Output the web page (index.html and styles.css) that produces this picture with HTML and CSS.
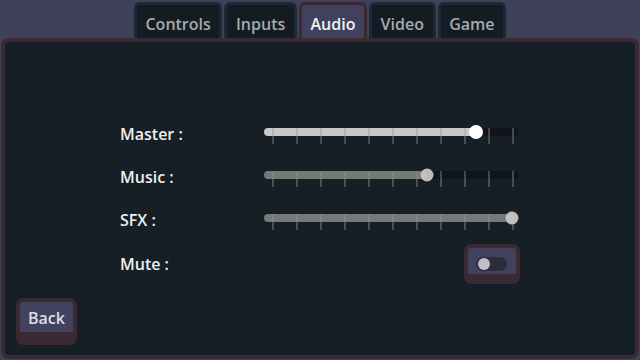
FILE: index.html
```html
<!DOCTYPE html>
<html>
<head>
<meta charset="utf-8">
<link rel="stylesheet" href="styles.css">
</head>
<body>
  <nav class="tabs">
    <div class="tab">Controls</div>
    <div class="tab">Inputs</div>
    <div class="tab active">Audio</div>
    <div class="tab">Video</div>
    <div class="tab">Game</div>
  </nav>
  <main class="panel">
    <div class="settings">
      <div class="label">Master :</div>
      <svg class="slider" width="256" height="32" viewBox="0 0 256 32">
        <rect class="track" x="0" y="13" width="255" height="8" rx="4"/>
        <rect class="fill focus" x="0" y="13" width="212" height="8" rx="4"/>
        <g class="ticks">
          <rect x="8" y="13" width="2" height="16"/><rect x="32" y="13" width="2" height="16"/><rect x="56" y="13" width="2" height="16"/><rect x="80" y="13" width="2" height="16"/><rect x="104" y="13" width="2" height="16"/><rect x="128" y="13" width="2" height="16"/><rect x="152" y="13" width="2" height="16"/><rect x="176" y="13" width="2" height="16"/><rect x="200" y="13" width="2" height="16"/><rect x="224" y="13" width="2" height="16"/><rect x="248" y="13" width="2" height="16"/>
        </g>
        <circle class="grab focus" cx="212" cy="17" r="7"/>
      </svg>

      <div class="label">Music :</div>
      <svg class="slider" width="256" height="32" viewBox="0 0 256 32">
        <rect class="track" x="0" y="13" width="255" height="8" rx="4"/>
        <rect class="fill" x="0" y="13" width="163" height="8" rx="4"/>
        <g class="ticks">
          <rect x="8" y="13" width="2" height="16"/><rect x="32" y="13" width="2" height="16"/><rect x="56" y="13" width="2" height="16"/><rect x="80" y="13" width="2" height="16"/><rect x="104" y="13" width="2" height="16"/><rect x="128" y="13" width="2" height="16"/><rect x="152" y="13" width="2" height="16"/><rect x="176" y="13" width="2" height="16"/><rect x="200" y="13" width="2" height="16"/><rect x="224" y="13" width="2" height="16"/><rect x="248" y="13" width="2" height="16"/>
        </g>
        <circle class="grab" cx="163" cy="17" r="6.5"/>
      </svg>

      <div class="label">SFX :</div>
      <svg class="slider" width="256" height="32" viewBox="0 0 256 32">
        <rect class="track" x="0" y="13" width="255" height="8" rx="4"/>
        <rect class="fill" x="0" y="13" width="249" height="8" rx="4"/>
        <g class="ticks">
          <rect x="8" y="13" width="2" height="16"/><rect x="32" y="13" width="2" height="16"/><rect x="56" y="13" width="2" height="16"/><rect x="80" y="13" width="2" height="16"/><rect x="104" y="13" width="2" height="16"/><rect x="128" y="13" width="2" height="16"/><rect x="152" y="13" width="2" height="16"/><rect x="176" y="13" width="2" height="16"/><rect x="200" y="13" width="2" height="16"/><rect x="224" y="13" width="2" height="16"/><rect x="248" y="13" width="2" height="16"/>
        </g>
        <circle class="grab" cx="248" cy="17" r="6.5"/>
      </svg>

      <div class="label mute">Mute :</div>
      <div class="toggle">
        <div class="switch"><div class="knob"></div></div>
      </div>
    </div>
    <div class="back">Back</div>
  </main>
</body>
</html>
```
FILE: styles.css
```css
* { box-sizing: border-box; }
html, body {
  margin: 0;
  width: 640px;
  height: 360px;
  overflow: hidden;
}
body {
  background: #40405a;
  font-family: "Open Sans", "Noto Sans", sans-serif;
  font-weight: 600;
  font-size: 16px;
  display: flex;
  flex-direction: column;
}
.tabs {
  display: flex;
  justify-content: center;
  gap: 2px;
  padding-top: 2px;
  height: 38px;
  flex: none;
}
.tab {
  height: 36px;
  padding: 8px 8.6px 0;
  line-height: 22px;
  border: 3px solid #1e2a33;
  border-bottom: 0;
  border-radius: 6px 6px 0 0;
  background: #141c23;
  color: #a9a9a9;
}
.tab.active {
  border-color: #3b2a34;
  background: #41415e;
  color: #f2f2f2;
}
.panel {
  flex: 1;
  margin: 0 1px 1px;
  border: 4px solid #3b2a34;
  border-radius: 8px;
  background: #161f26;
  display: flex;
  flex-direction: column;
  align-items: flex-start;
}
.settings {
  display: grid;
  grid-template-columns: 144px 256px;
  grid-template-rows: 32px 32px 32px 40px;
  row-gap: 11px;
  margin: 73px 0 0 115px;
  align-items: center;
}
.label {
  color: #efefef;
  line-height: 22px;
  padding-top: 5px;
}
.label.mute { padding-top: 0; }
.slider { display: block; }
.track { fill: #111418; }
.fill { fill: #757978; }
.fill.focus { fill: #c8c8c8; }
.ticks rect { fill: rgba(150,150,150,0.4); }
.grab { fill: #cacaca; opacity: 0.92; }
.grab.focus { fill: #ffffff; opacity: 1; }
.toggle {
  justify-self: end;
  width: 56px;
  height: 40px;
  border: 4px solid #3b2a34;
  border-bottom-width: 10px;
  border-radius: 7px;
  background: #42425f;
  padding: 9px 0 0 8px;
}
.switch {
  width: 31px;
  height: 14px;
  border-radius: 7px;
  background: #2d2c3a;
  padding: 1px 2px;
}
.knob {
  width: 12px;
  height: 12px;
  border-radius: 50%;
  background: #bfbfc7;
}
.back {
  margin: 14px 0 0 11px;
  width: 61px;
  height: 47px;
  border: 4px solid #3b2a34;
  border-bottom-width: 13px;
  border-radius: 8px;
  background: #42425f;
  color: #dedee4;
  display: flex;
  align-items: center;
  justify-content: center;
  line-height: 22px;
  padding-top: 1px;
}
```
